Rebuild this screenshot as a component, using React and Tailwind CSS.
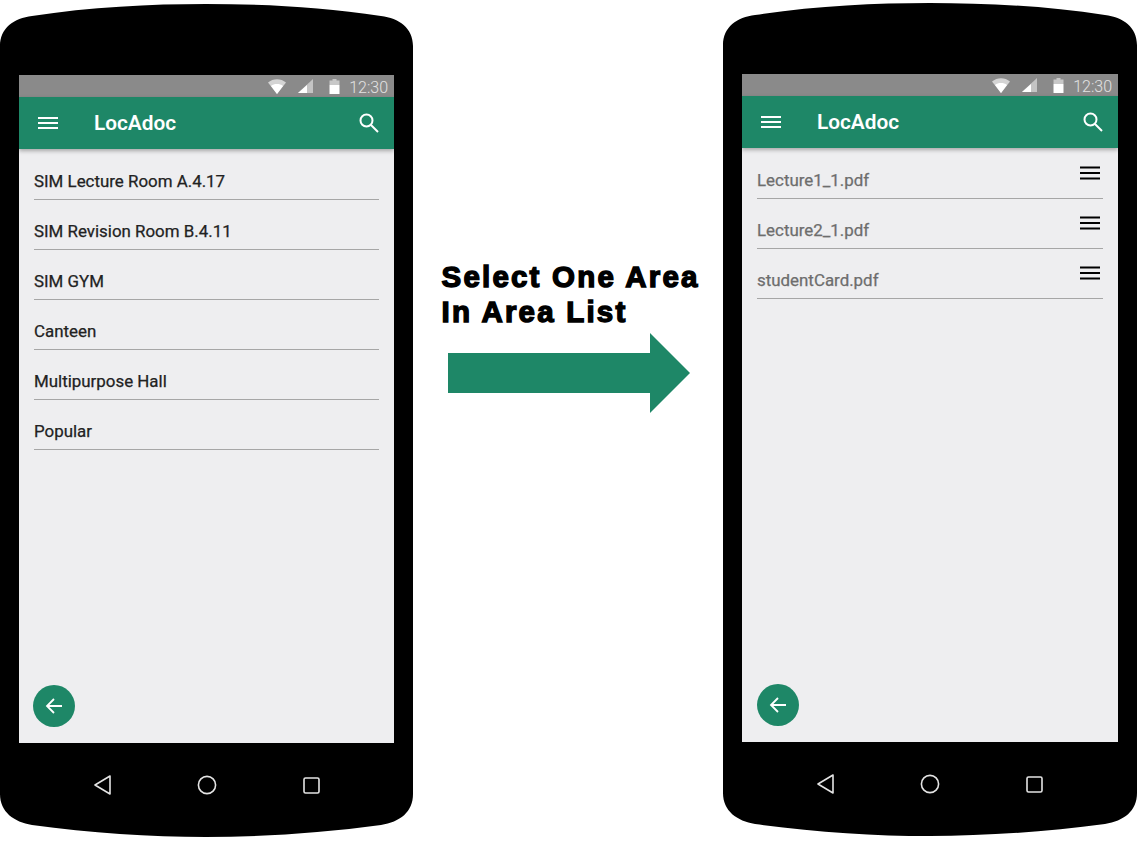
const PHONE_PATH = "M0 42 C0 24 14 14 32 12 C90 3 150 0 206 0 C262 0 322 3 381 12 C399 14 413 24 413 42 L413 790 C413 808 400 818 381 821 C322 829 262 833 206 833 C150 833 90 829 32 821 C14 818 0 808 0 790 Z";

function StatusIcons() {
  return (
    <div className="h-[22px] bg-[#8a8a8a] flex items-center justify-end pr-[6px] shrink-0">
      <svg width="18" height="15" viewBox="0 0 18 15" className="mr-[12px]">
        <path d="M0 3.5 C5 -1 13 -1 18 3.5 L9 15 Z" fill="#d4d4d4" />
        <path d="M3 7 C6 4.4 12 4.4 15 7 L9 15 Z" fill="#ffffff" />
      </svg>
      <svg width="16" height="14" viewBox="0 0 16 14" className="mr-[15px]">
        <path d="M15 0 V14 H0 Z" fill="#c4c4c4" />
        <path d="M9 6 V14 H0 Z" fill="#ffffff" />
      </svg>
      <svg width="11" height="15" viewBox="0 0 11 15" className="mr-[9px]">
        <path d="M3.5 0 H7.5 V1.5 H10.5 V6 H0.5 V1.5 H3.5 Z" fill="#c8c8c8" />
        <path d="M0.5 6 H10.5 V15 H0.5 Z" fill="#ffffff" />
      </svg>
      <span className="text-[16px] leading-none font-light text-[#e2e2e2] font-['Roboto',sans-serif] pt-[3px]">12:30</span>
    </div>
  );
}

function Header() {
  return (
    <div className="relative z-10 h-[52px] bg-[#1e8767] flex items-center pl-[19px] pr-[15px] shadow-[0_2px_4px_rgba(0,0,0,0.3)] shrink-0">
      <svg width="20" height="14" viewBox="0 0 20 14" className="mr-[36px]">
        <path d="M0 2 H20 M0 7 H20 M0 12 H20" stroke="#fff" strokeWidth="1.8" />
      </svg>
      <span className="text-[20.8px] leading-none font-semibold text-white font-['Roboto',sans-serif] flex-1 pt-[1px]">LocAdoc</span>
      <svg width="20" height="20" viewBox="0 0 20 20" fill="none" stroke="#fff" strokeWidth="2">
        <circle cx="7.5" cy="7.5" r="6" />
        <path d="M12 12 L19 19" />
      </svg>
    </div>
  );
}

function Row({ label, file }) {
  return (
    <div className="h-[50px] border-b border-[#a6a6a6] flex items-end pb-[8px] relative">
      <span className={`text-[16.9px] leading-[20px] font-normal font-['Roboto',sans-serif] [-webkit-text-stroke:0.25px_currentColor] ${file ? "text-[#6d6d6d]" : "text-[#222222]"}`}>
        {label}
      </span>
      {file && (
        <svg width="20" height="14" viewBox="0 0 20 14" className="absolute right-[3px] top-[17px]">
          <path d="M0 1.5 H20 M0 7 H20 M0 12.5 H20" stroke="#000" strokeWidth="2" />
        </svg>
      )}
    </div>
  );
}

function Phone({ rows, file, className, wide }) {
  return (
    <div className={`relative h-[833px] shrink-0 ${wide ? "w-[414px]" : "w-[413px]"} ${className}`}>
      <svg width={wide ? 414 : 413} height="833" viewBox="0 0 413 833" preserveAspectRatio="none" className="absolute inset-0">
        <path d={PHONE_PATH} fill="#000" />
      </svg>
      <div className="relative h-full flex flex-col pt-[71px] pl-[19px] pr-[19px]">
        <div className="h-[668px] bg-[#eeeef0] flex flex-col shrink-0">
          <StatusIcons />
          <Header />
          <div className="flex-1 flex flex-col pl-[15px] pr-[15.5px] pt-[1px]">
            {rows.map((r) => (
              <Row key={r} label={r} file={file} />
            ))}
          </div>
          <div className={`w-[42px] h-[42px] mb-[16px] rounded-full bg-[#1e8767] flex items-center justify-center ${wide ? "ml-[14.5px]" : "ml-[14px]"}`}>
            <svg width="18" height="18" viewBox="0 0 18 18" fill="none" stroke="#fff" strokeWidth="1.8">
              <path d="M17 9 H2 M9 2 L2 9 L9 16" />
            </svg>
          </div>
        </div>
        <div className="flex-1 flex items-start pt-[32px] pl-[75px]">
          <svg width="17" height="20" viewBox="0 0 17 20" fill="none" stroke="#e4e4e4" strokeWidth="1.6" strokeLinejoin="round">
            <path d="M16 1 V19 L1 10 Z" />
          </svg>
          <svg width="20" height="20" viewBox="0 0 20 20" fill="none" stroke="#e4e4e4" strokeWidth="1.6" className="ml-[86px]">
            <circle cx="10" cy="10" r="8.6" />
          </svg>
          <svg width="17" height="17" viewBox="0 0 17 17" fill="none" stroke="#e4e4e4" strokeWidth="1.6" className="ml-[86px] mt-[2px]">
            <rect x="1" y="1" width="15" height="15" rx="1.5" />
          </svg>
        </div>
      </div>
    </div>
  );
}

export default function App() {
  return (
    <div className="w-[1137px] h-[841px] bg-white flex overflow-hidden">
      <Phone
        className="mt-[4px]"
        rows={["SIM Lecture Room A.4.17", "SIM Revision Room B.4.11", "SIM GYM", "Canteen", "Multipurpose Hall", "Popular"]}
      />
      <div className="w-[310px] shrink-0 pl-[28.5px] pt-[259px] flex flex-col">
        <div className="text-[29.5px] leading-[35px] font-bold text-black tracking-[2.2px] font-['Liberation_Sans',sans-serif] [-webkit-text-stroke:1.4px_#000] whitespace-nowrap">
          <div>Select One Area</div>
          <div>In Area List</div>
        </div>
        <svg width="242" height="80" viewBox="0 0 242 80" className="ml-[6.5px] mt-[4px]">
          <path d="M0 20 H202 V0 L242 40 L202 80 V60 H0 Z" fill="#1e8767" />
        </svg>
      </div>
      <Phone
        className="mt-[3px]"
        wide
        file
        rows={["Lecture1_1.pdf", "Lecture2_1.pdf", "studentCard.pdf"]}
      />
    </div>
  );
}
